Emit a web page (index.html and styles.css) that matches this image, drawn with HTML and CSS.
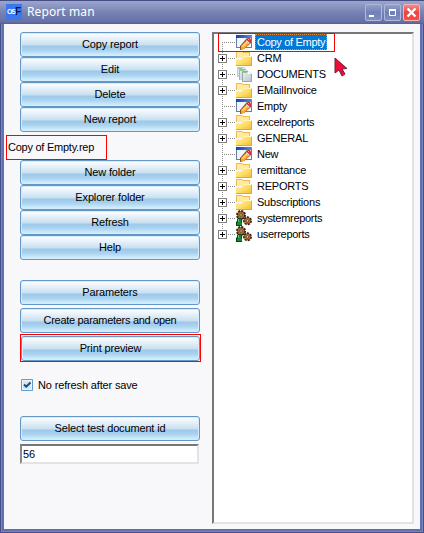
FILE: index.html
```html
<!DOCTYPE html>
<html lang="en">
<head>
<meta charset="utf-8">
<title>Report man</title>
<link rel="stylesheet" href="styles.css">
</head>
<body>
<svg class="defs" aria-hidden="true">
  <defs>
    <linearGradient id="gold" x2="1" y2="1"><stop offset="0" stop-color="#fff3ad"/><stop offset=".5" stop-color="#ffde68"/><stop offset="1" stop-color="#f2b632"/></linearGradient>
    <linearGradient id="bar" x2="1"><stop offset="0" stop-color="#1740a4"/><stop offset="1" stop-color="#5b88e6"/></linearGradient>
    <linearGradient id="paper" x2="1" y2="1"><stop offset="0" stop-color="#f0f6f7"/><stop offset="1" stop-color="#b4c3c8"/></linearGradient>
    <symbol id="folder" viewBox="0 0 16 16">
      <path d="M0 1h6l1 1h7v6H0z" fill="#f0b956"/>
      <path d="M1 2h5l1 1h6v5H1z" fill="#ffeb9c"/>
      <path d="M0 9h5l2-3h9v10H0z" fill="url(#gold)"/>
      <path d="M0 9.500h5.500l2-3H16" fill="none" stroke="#fff3b8"/>
      <path d="M0 15.500h15.500V7" fill="none" stroke="#e9a52d"/>
    </symbol>
    <symbol id="report" viewBox="0 0 16 16">
      <path d="M0 1h16v13H0z" fill="#647da9"/>
      <path d="M1 4h14v9H1z" fill="#f1f5fd"/>
      <path d="M0 1h16v3H0z" fill="url(#bar)"/>
      <path d="M4 12l7-8 4 2v3l-7 6-4 1z" fill="#934a27"/>
      <path d="M5 12l5-5 3 3-5 5-3 .5z" fill="#f7a82b"/>
      <path d="M6 12l5-5 1 1-5 5z" fill="#ffe071"/>
      <path d="M10 7l1-1 3 3-1 1z" fill="#e3e5e9"/>
      <path d="M11 6l1-2 2 0 1 2v2l-1 1z" fill="#d83635"/>
      <path d="M12 5h1v1h-1z" fill="#ff9b91"/>
    </symbol>
    <symbol id="documents" viewBox="0 0 16 16">
      <path d="M1 1h7l2 2v8H1z" fill="url(#paper)"/>
      <path d="M1.500 11V1.500H8" fill="none" stroke="#bccbd0"/>
      <path d="M3 3h7l2 2v9H3z" fill="url(#paper)"/>
      <path d="M3.500 14V3.500H10" fill="none" stroke="#a5b8be"/>
      <path d="M6 5h7l3 3v8H6z" fill="url(#paper)"/>
      <path d="M6.500 15.500V5.500H12M6.500 15.500h9V8" fill="none" stroke="#95a8af"/>
      <path d="M2 2h4v1H2zM4 4h4v1H4zM7 6h4v1H7z" fill="#8cc78b"/>
      <path d="M12 5l3 3h-3z" fill="#fff"/>
    </symbol>
    <symbol id="gears" viewBox="0 0 16 16">
      <circle cx="5" cy="5" r="4" fill="#98602b" stroke="#382414" stroke-width="2" stroke-dasharray="2 1.100"/>
      <circle cx="5" cy="5" r="3" fill="#a96c31"/>
      <circle cx="5" cy="5" r="1.200" fill="#e5dccd" stroke="#4b2b15" stroke-width=".7"/>
      <circle cx="11.500" cy="10.800" r="3.500" fill="#98602b" stroke="#382414" stroke-width="2" stroke-dasharray="2 1.100"/>
      <circle cx="11.500" cy="10.800" r="2.800" fill="#a96c31"/>
      <circle cx="11.500" cy="10.800" r="1.200" fill="#e5dccd" stroke="#4b2b15" stroke-width=".7"/>
      <path d="M1 9l1-1h3l1 1v7H0v-4l1-1z" fill="#143d1b"/>
      <path d="M2 9h3v3l1 1v2H1v-2l1-1z" fill="#148c35"/>
      <path d="M2 9h1v3H2z" fill="#50cf6b"/>
    </symbol>
  </defs>
</svg>
<div class="window">
  <header class="titlebar">
    <span class="app-icon"><span>OS</span><b>F</b></span>
    <h1>Report man</h1>
    <div class="controls">
      <svg class="control" viewBox="0 0 15 15"><path d="M3 10h5v2H3z" fill="#fff"/></svg>
      <svg class="control" viewBox="0 0 15 15"><path d="M4.500 4.500h6v6h-6z" fill="none" stroke="#fff"/><path d="M4 4h7v2H4z" fill="#fff"/></svg>
      <svg class="control close" viewBox="0 0 15 15"><path d="M3.500 3.500l8 8M11.500 3.500l-8 8" stroke="#fff" stroke-width="2.400"/></svg>
    </div>
  </header>
  <main class="content">
    <section class="actions">
      <button>Copy report</button>
      <button>Edit</button>
      <button>Delete</button>
      <button>New report</button>
      <div class="filename">Copy of Empty.rep</div>
      <button>New folder</button>
      <button>Explorer folder</button>
      <button>Refresh</button>
      <button>Help</button>
      <div class="spaced">
        <button>Parameters</button>
        <button class="snug">Create parameters and open</button>
        <div class="marked"><button>Print preview</button></div>
      </div>
      <label class="check"><svg viewBox="0 0 12 12"><path d="M.5.5h11v11H.5z" fill="#eef5fb" stroke="#5e9dc9"/><path d="M2 2h8v8H2z" fill="#d5e5f3"/><path d="M3 5.500l2.200 2.200L9.500 3.500" fill="none" stroke="#174b7b" stroke-width="2"/></svg><span>No refresh after save</span></label>
      <button>Select test document id</button>
      <input class="doc-id" value="56" aria-label="Test document id">
    </section>
    <section class="tree-panel">
      <ul class="tree">
        <li class="leaf"><i></i><svg><use href="#report"/></svg><span class="selected">Copy of Empty</span></li>
        <li><i></i><svg><use href="#folder"/></svg><span>CRM</span></li>
        <li><i></i><svg><use href="#documents"/></svg><span>DOCUMENTS</span></li>
        <li><i></i><svg><use href="#folder"/></svg><span>EMailInvoice</span></li>
        <li class="leaf"><i></i><svg><use href="#report"/></svg><span>Empty</span></li>
        <li><i></i><svg><use href="#folder"/></svg><span>excelreports</span></li>
        <li><i></i><svg><use href="#folder"/></svg><span>GENERAL</span></li>
        <li class="leaf"><i></i><svg><use href="#report"/></svg><span>New</span></li>
        <li><i></i><svg><use href="#folder"/></svg><span>remittance</span></li>
        <li><i></i><svg><use href="#folder"/></svg><span>REPORTS</span></li>
        <li><i></i><svg><use href="#folder"/></svg><span>Subscriptions</span></li>
        <li><i></i><svg><use href="#gears"/></svg><span class="snug">systemreports</span></li>
        <li><i></i><svg><use href="#gears"/></svg><span class="snug">userreports</span></li>
      </ul>
      <div class="tree-highlight"></div>
      <svg class="pointer" viewBox="0 0 14 20"><path d="M1 1v15l4-3 3 6 3-2-3-5 5-.5z" fill="#ed0d3a" stroke="#6d243b"/></svg>
    </section>
  </main>
</div>
</body>
</html>
```
FILE: styles.css
```css
* { box-sizing: border-box; }
body {
  margin: 0;
  width: 424px;
  height: 533px;
  overflow: hidden;
  font: 11px/16px "Liberation Sans", Arial, sans-serif;
  letter-spacing: -0.15px;
  color: #000;
}
.defs { position: absolute; width: 0; height: 0; }
.window {
  height: 533px;
  padding: 0 4px 4px;
  background: #6370af;
  box-shadow: inset 1px 0 #465086, inset -1px 0 #465086, inset 0 -1px #465086, inset 2px 0 #7784bd, inset -2px -2px #7784bd;
}
.titlebar {
  display: flex;
  align-items: flex-start;
  height: 24px;
  margin: 0 -4px;
  padding: 4px 4px 0 6px;
  background: linear-gradient(#454f83 0 1px, #9da5ce 1px, #8993bf 7px, #7681b1 13px, #6570a6 22px, #525d99);
}
.app-icon {
  display: flex;
  align-items: center;
  justify-content: center;
  width: 16px;
  height: 16px;
  background: #3979ed;
  color: #fff;
  font-size: 7px;
  font-weight: bold;
  letter-spacing: -1px;
}
.app-icon span { width: 8px; }
.app-icon b { width: 6px; color: #0d153f; font-size: 10px; letter-spacing: 0; }
h1 {
  margin: 0 0 0 5px;
  font: 12px/16px "Noto Sans", sans-serif;
  letter-spacing: -0.1px;
  color: #fff;
}
.titlebar h1 { letter-spacing: 0.1px; }
.controls { display: flex; gap: 2px; margin-left: auto; }
.control {
  width: 17px;
  height: 17px;
  border: 1px solid #b0b9da;
  border-radius: 2px;
  background: linear-gradient(#939fc9, #7180b7 50%, #7f8dbe);
}
.close { border-color: #f3b5b8; background: linear-gradient(#f18b88, #eb4540 50%, #ff4d45); }
.content {
  display: flex;
  height: 505px;
  padding: 8px 6px 5px 16px;
  background: #f8f8fb;
}
.actions { width: 180px; margin-right: 12px; }
button {
  display: block;
  width: 180px;
  height: 25px;
  padding: 0 0 1px;
  border: 1px solid #6297c8;
  border-radius: 3px;
  box-shadow: inset 0 0 0 1px #d5edfb;
  background: linear-gradient(#fff, #e4eff9 6px, #c8dff1 12px, #9dc8e8 13px, #a9d2ef 17px, #d9f3ff 23px);
  font: inherit;
  letter-spacing: inherit;
  color: inherit;
}
.filename {
  width: 101px;
  height: 25px;
  margin: 3px 0 0 -14px;
  padding-left: 1px;
  border: 1px solid #f00;
  line-height: 23px;
  letter-spacing: -0.25px;
  white-space: nowrap;
}
.spaced { display: grid; gap: 3px; margin-top: 20px; }
.marked {
  width: 181px;
  height: 28px;
  margin-top: -2px;
  padding-top: 1px;
  border: 1px solid #f00;
}
.marked button { width: 179px; }
.check { display: flex; align-items: center; height: 16px; margin: 15px 0 0 1px; }
.check svg { width: 12px; height: 12px; margin-right: 5px; }
.check + button { margin-top: 23px; }
.doc-id {
  display: block;
  width: 179px;
  height: 20px;
  margin-top: 3px;
  padding: 0 0 1px 1px;
  border: 2px solid;
  border-color: #777 #e3e3e3 #e3e3e3 #888;
  border-radius: 0;
  font: inherit;
  background: #fff;
}
.tree-panel {
  position: relative;
  width: 202px;
  height: 492px;
  border: 2px solid;
  border-color: #777 #e3e3e3 #e3e3e3 #777;
  background: #fff;
}
.tree { margin: 0; padding: 0 0 0 4px; list-style: none; letter-spacing: -0.22px; }
.tree li {
  display: flex;
  height: 16px;
  background: repeating-linear-gradient(#888 0 1px, transparent 1px 2px) 4px 0 / 1px 16px no-repeat;
}
.tree li:first-child { background-size: 1px 8px; background-position: 4px 8px; }
.tree li:last-child { background-size: 1px 8px; }
.tree i {
  width: 18px;
  background:
    linear-gradient(#000, #000) 2px 8px / 5px 1px no-repeat,
    linear-gradient(#000, #000) 4px 6px / 1px 5px no-repeat,
    linear-gradient(#fff, #fff) 1px 5px / 7px 7px no-repeat,
    linear-gradient(#808080, #808080) 0 4px / 9px 9px no-repeat,
    repeating-linear-gradient(90deg, #888 0 1px, transparent 1px 2px) 10px 8px / 8px 1px no-repeat;
}
.tree .leaf i { background: repeating-linear-gradient(90deg, #888 0 1px, transparent 1px 2px) 4px 8px / 14px 1px no-repeat; }
.tree svg { width: 16px; height: 16px; }
.tree span { height: 16px; margin-left: 3px; padding: 0 2px; line-height: 16px; white-space: nowrap; }
.tree .selected { width: 72px; letter-spacing: -0.3px; background: #0078d7; color: #fff; outline: 1px dotted #e58a36; outline-offset: -1px; }
.snug, .tree .snug { letter-spacing: -0.3px; }
.tree-highlight {
  position: absolute;
  top: -1px;
  left: 4px;
  width: 117px;
  height: 19px;
  border: 1px solid #f00;
}
.pointer { position: absolute; top: 23px; left: 120px; width: 14px; height: 20px; }
```
